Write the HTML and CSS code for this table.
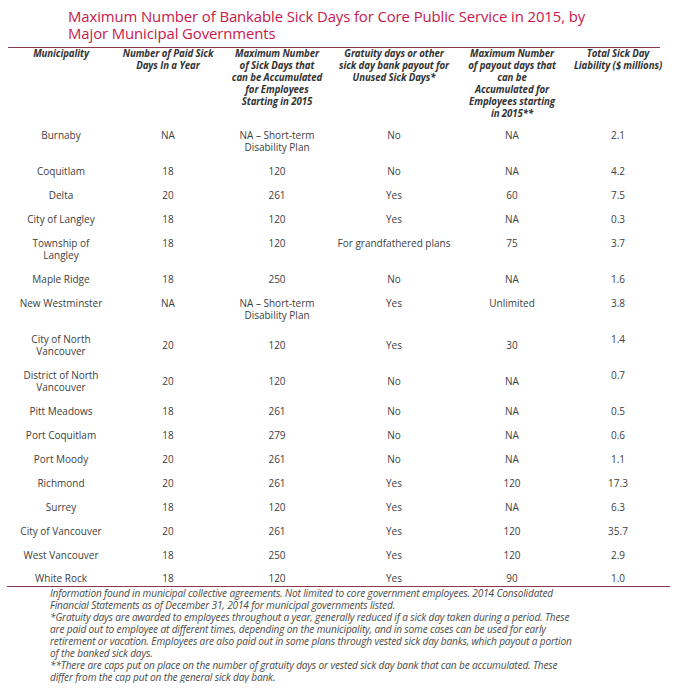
FILE: index.html
```html
<!DOCTYPE html>
<html>
<head>
<meta charset="utf-8">
<link rel="stylesheet" href="styles.css">
</head>
<body>
<div class="page">
  <h1 class="title">Maximum Number of Bankable Sick Days for Core Public Service in 2015, by<br>Major Municipal Governments</h1>
  <div class="rule rule-top"></div>
  <table class="data">
    <colgroup>
      <col class="c1"><col class="c2"><col class="c3"><col class="c4"><col class="c5"><col class="c6">
    </colgroup>
    <thead>
      <tr>
        <th>Municipality</th>
        <th>Number of Paid Sick<br>Days In a Year</th>
        <th>Maximum Number<br>of Sick Days that<br>can be Accumulated<br>for Employees<br>Starting in 2015</th>
        <th>Gratuity days or other<br>sick day bank payout for<br>Unused Sick Days*</th>
        <th>Maximum Number<br>of payout days that<br>can be<br>Accumulated for<br>Employees starting<br>in 2015**</th>
        <th>Total Sick Day<br>Liability ($ millions)</th>
      </tr>
    </thead>
    <tbody>
      <tr><td>Burnaby</td><td>NA</td><td>NA – Short-term<br>Disability Plan</td><td>No</td><td>NA</td><td>2.1</td></tr>
      <tr><td>Coquitlam</td><td>18</td><td>120</td><td>No</td><td>NA</td><td>4.2</td></tr>
      <tr><td>Delta</td><td>20</td><td>261</td><td>Yes</td><td>60</td><td>7.5</td></tr>
      <tr><td>City of Langley</td><td>18</td><td>120</td><td>Yes</td><td>NA</td><td>0.3</td></tr>
      <tr><td>Township of<br>Langley</td><td>18</td><td>120</td><td>For grandfathered plans</td><td>75</td><td>3.7</td></tr>
      <tr><td>Maple Ridge</td><td>18</td><td>250</td><td>No</td><td>NA</td><td>1.6</td></tr>
      <tr><td>New Westminster</td><td>NA</td><td>NA – Short-term<br>Disability Plan</td><td>Yes</td><td>Unlimited</td><td>3.8</td></tr>
      <tr class="mid"><td>City of North<br>Vancouver</td><td>20</td><td>120</td><td>Yes</td><td>30</td><td class="top">1.4</td></tr>
      <tr class="mid"><td>District of North<br>Vancouver</td><td>20</td><td>120</td><td>No</td><td>NA</td><td class="top">0.7</td></tr>
      <tr><td>Pitt Meadows</td><td>18</td><td>261</td><td>No</td><td>NA</td><td>0.5</td></tr>
      <tr><td>Port Coquitlam</td><td>18</td><td>279</td><td>No</td><td>NA</td><td>0.6</td></tr>
      <tr><td>Port Moody</td><td>20</td><td>261</td><td>No</td><td>NA</td><td>1.1</td></tr>
      <tr><td>Richmond</td><td>20</td><td>261</td><td>Yes</td><td>120</td><td>17.3</td></tr>
      <tr><td>Surrey</td><td>18</td><td>120</td><td>Yes</td><td>NA</td><td>6.3</td></tr>
      <tr><td>City of Vancouver</td><td>20</td><td>261</td><td>Yes</td><td>120</td><td>35.7</td></tr>
      <tr class="tight"><td>West Vancouver</td><td>18</td><td>250</td><td>Yes</td><td>120</td><td>2.9</td></tr>
      <tr class="last"><td>White Rock</td><td>18</td><td>120</td><td>Yes</td><td>90</td><td>1.0</td></tr>
    </tbody>
  </table>
  <div class="rule rule-bottom"></div>
  <div class="notes">
    <p>Information found in municipal collective agreements. Not limited to core government employees. 2014 Consolidated<br>Financial Statements as of December 31, 2014 for municipal governments listed.</p>
    <p>*Gratuity days are awarded to employees throughout a year, generally reduced if a sick day taken during a period. These<br>are paid out to employee at different times, depending on the municipality, and in some cases can be used for early<br>retirement or vacation. Employees are also paid out in some plans through vested sick day banks, which payout a portion<br>of the banked sick days.</p>
    <p>**There are caps put on place on the number of gratuity days or vested sick day bank that can be accumulated. These<br>differ from the cap put on the general sick day bank.</p>
  </div>
</div>
</body>
</html>
```

FILE: styles.css
```css
html, body {
  margin: 0;
  padding: 0;
  background: #ffffff;
}

.page {
  padding: 8px 0 0 8px;
  font-family: "Open Sans", "Noto Sans", sans-serif;
}

.title {
  margin: 0 0 0 60px;
  font-weight: normal;
  font-size: 14.9px;
  line-height: 16.5px;
  color: #c8174c;
  height: 39px;
  letter-spacing: -0.1px;
}

.rule {
  height: 1px;
  background: #8c3a4c;
}

.rule-top {
  width: 652px;
}

.rule-bottom {
  width: 663px;
  margin-left: -1px;
}

.data {
  width: 660px;
  border-collapse: collapse;
  table-layout: fixed;
}

.c1 { width: 106px; }
.c2 { width: 108px; }
.c3 { width: 110px; }
.c4 { width: 124px; }
.c5 { width: 112px; }
.c6 { width: 100px; }

.data th {
  font-size: 9.7px;
  font-weight: bold;
  font-style: italic;
  line-height: 12px;
  color: #333333;
  text-align: center;
  vertical-align: top;
  padding: 0 0 3px 0;
  letter-spacing: -0.1px;
  white-space: nowrap;
}

.data td {
  font-size: 10px;
  line-height: 12px;
  color: #404040;
  text-align: center;
  vertical-align: top;
  padding: 6px 0;
  white-space: nowrap;
}

.data tr.mid td {
  vertical-align: middle;
}

.data tr.mid td.top {
  vertical-align: top;
}

.data tr.tight td {
  padding-bottom: 5px;
}

.data tr.last td {
  padding-bottom: 2px;
}

.notes {
  margin-left: 42px;
  font-size: 10.1px;
  font-style: italic;
  line-height: 12px;
  color: #4a4a4a;
  letter-spacing: -0.15px;
}

.notes p {
  margin: 0;
  white-space: nowrap;
}
```
